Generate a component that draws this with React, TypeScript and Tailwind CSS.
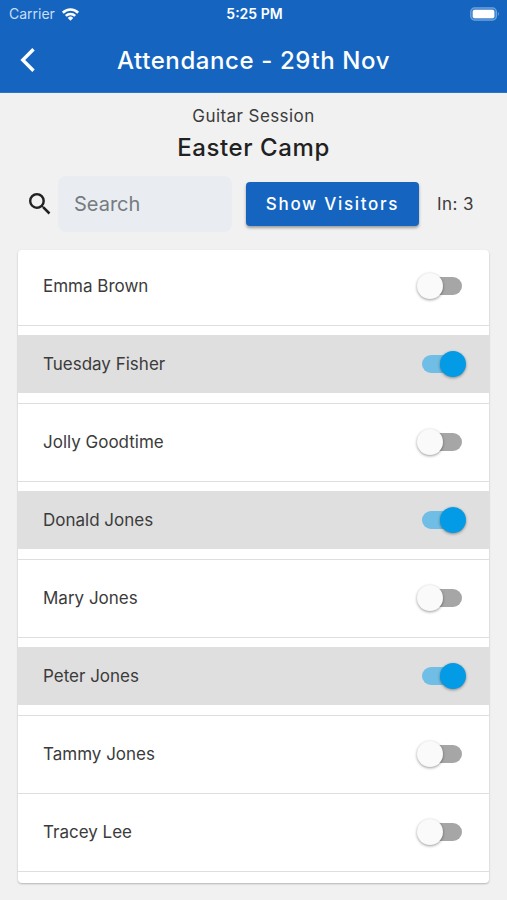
import { useState } from "react";

type Person = { name: string; present: boolean };

const people: Person[] = [
  { name: "Emma Brown", present: false },
  { name: "Tuesday Fisher", present: true },
  { name: "Jolly Goodtime", present: false },
  { name: "Donald Jones", present: true },
  { name: "Mary Jones", present: false },
  { name: "Peter Jones", present: true },
  { name: "Tammy Jones", present: false },
  { name: "Tracey Lee", present: false },
];

function StatusBar() {
  return (
    <div className="grid h-7 grid-cols-3 items-center pr-[7px] pl-[9px] text-sm">
      <div className="flex items-center gap-[6px] text-[#c9def5]">
        <span>Carrier</span>
        <svg viewBox="0 0 20 15" className="h-[14px] w-[19px]" fill="none" stroke="white" strokeWidth="2.8" aria-hidden="true">
          <path d="M1.8 6.1a11.7 11.7 0 0 1 16.4 0" />
          <path d="M5 9.5a7.2 7.2 0 0 1 10 0" />
          <path d="M10 14.6 7.1 11.7a4.1 4.1 0 0 1 5.8 0Z" fill="white" stroke="none" />
        </svg>
      </div>
      <div className="text-center font-semibold">5:25 PM</div>
      <svg viewBox="0 0 31 14" className="h-[14px] w-[30px] justify-self-end" aria-hidden="true">
        <rect x="0.7" y="0.7" width="26.6" height="12.6" rx="4" fill="#3f83cd" stroke="#6ea3dc" strokeWidth="1.2" />
        <rect x="2.8" y="2.6" width="22.4" height="8.8" rx="2" fill="white" />
        <path d="M28.8 4.7q2 2.3 0 4.6Z" fill="#6ea3dc" />
      </svg>
    </div>
  );
}

function Toggle({ id, checked, onChange }: { id: string; checked: boolean; onChange: () => void }) {
  return (
    <span className="relative flex h-[26px] w-[49px] items-center">
      <input
        id={id}
        type="checkbox"
        role="switch"
        checked={checked}
        onChange={onChange}
        className="peer mx-auto h-[18px] w-10 cursor-pointer appearance-none rounded-full bg-[#a6a6a6] checked:bg-[#70bee5]"
      />
      <span className="pointer-events-none absolute left-0 size-[26px] rounded-full bg-[#fafafa] shadow-[0_1px_3px_rgba(0,0,0,0.4)] peer-checked:right-0 peer-checked:left-auto peer-checked:bg-[#039be5]" />
    </span>
  );
}

export default function App() {
  const [list, setList] = useState(people);
  const toggle = (name: string) =>
    setList(list.map((p) => (p.name === name ? { ...p, present: !p.present } : p)));

  return (
    <div className="min-h-screen bg-[#f1f1f1] font-['Inter',sans-serif] text-[#3b3b3b]">
      <header className="border-b border-[#2d75c4] bg-[#1565c0] text-white">
        <StatusBar />
        <div className="grid h-16 grid-cols-[56px_1fr_56px] items-center">
          <button type="button" aria-label="Back" className="flex h-full items-center justify-center">
            <svg viewBox="0 0 16 24" className="h-6 w-4" fill="none" stroke="currentColor" strokeWidth="3.4" aria-hidden="true">
              <path d="M13.5 1.2 2.8 12l10.7 10.8" />
            </svg>
          </button>
          <h1 className="text-center text-2xl leading-[33px] font-medium tracking-wide">Attendance - 29th Nov</h1>
        </div>
      </header>

      <main className="px-[18px] pt-[9px] pb-[17px]">
        <div className="text-center">
          <p className="text-[17px] leading-7 tracking-wide">Guitar Session</p>
          <h2 className="text-2xl leading-9 font-medium tracking-wide text-[#212121]">Easter Camp</h2>
        </div>

        <div className="mt-[10px] flex items-center">
          <label htmlFor="search" className="flex w-10 justify-center pl-1">
            <svg viewBox="3 3 18 18" className="size-[22px]" fill="#212121" role="img" aria-label="Search">
              <path d="M15.5 14h-.79l-.28-.27A6.47 6.47 0 0 0 16 9.5 6.5 6.5 0 1 0 9.5 16c1.61 0 3.09-.59 4.23-1.57l.27.28v.79l5 4.99L20.49 19zm-6 0C7.01 14 5 11.99 5 9.5S7.01 5 9.5 5 14 7.01 14 9.5 11.99 14 9.5 14" />
            </svg>
          </label>
          <input
            id="search"
            type="text"
            placeholder="Search"
            className="h-14 min-w-0 flex-1 rounded-lg bg-[#e9edf1] px-4 text-xl outline-none placeholder:text-[#757b80]"
          />
          <button
            type="button"
            className="ml-[14px] h-11 w-[173px] rounded bg-[#1565c0] text-[17px] leading-[25px] font-medium tracking-widest text-white shadow-[0_2px_3px_rgba(0,0,0,0.35)]"
          >
            Show Visitors
          </button>
          <p className="w-[70px] pl-[18px] text-[17px] leading-[25px] tracking-wide whitespace-nowrap">
            In: {list.filter((p) => p.present).length}
          </p>
        </div>

        <ul className="mt-[18px] overflow-hidden rounded bg-white pb-[11px] shadow-[0_1px_2px_rgba(0,0,0,0.25)]">
          {list.map((p, i) => {
            const id = `person-${i}`;
            return (
              <li key={p.name} className="border-b border-[#dedede] pt-[9px] pb-[10px] first:pt-[7px]">
                <div className={`flex h-[58px] items-center justify-between pr-[23px] pl-[25px] ${p.present ? "bg-[#dfdfdf]" : "bg-white"}`}>
                  <label htmlFor={id} className="text-[17px] leading-[25px]">
                    {p.name}
                  </label>
                  <Toggle id={id} checked={p.present} onChange={() => toggle(p.name)} />
                </div>
              </li>
            );
          })}
        </ul>
      </main>
    </div>
  );
}
